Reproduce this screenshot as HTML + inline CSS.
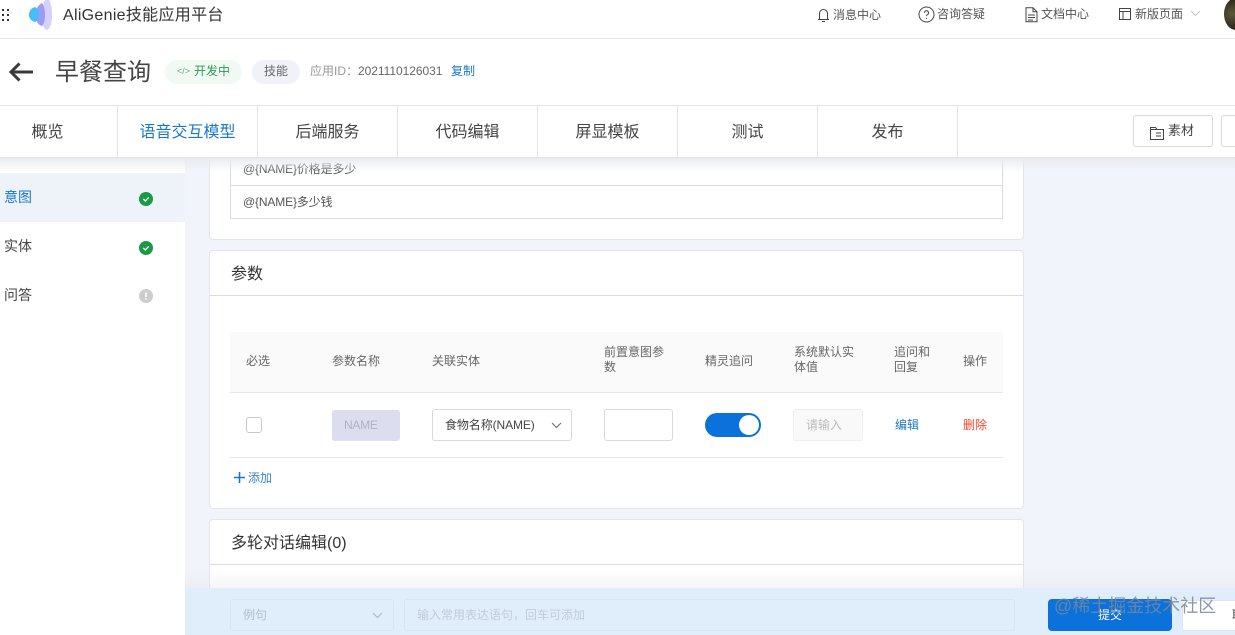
<!DOCTYPE html>
<html lang="zh-CN"><head><meta charset="utf-8"><title>AliGenie</title>
<style>
*{box-sizing:border-box;margin:0;padding:0}
html,body{width:1235px;height:635px;overflow:hidden;background:#f1f4fb}
body{position:relative;font-family:"Liberation Sans","Noto Sans CJK SC",sans-serif;color:#333}
.a{position:absolute;white-space:nowrap}
.abs{position:absolute}
.t12{font-size:12px;line-height:18px;color:#555}
.tab{position:absolute;top:106px;height:51px;line-height:54px;text-align:center;font-size:16px;color:#444;border-right:1px solid #e4e4e4;background:#fff}
.card{position:absolute;left:209px;width:815px;background:#fff;border:1px solid #e3e5ea;border-radius:4px}
.hl{position:absolute;height:1px;background:#e2e2e2}
</style></head><body>

<!-- top bar -->
<div class="abs" style="left:0;top:0;width:1235px;height:39px;background:#fff;border-bottom:1px solid #e8e8e8"></div>
<svg class="abs" style="left:0;top:0" width="60" height="32" viewBox="0 0 60 32">
<g fill="#333"><rect x="2" y="9" width="2" height="2"/><rect x="7" y="9" width="2" height="2"/><rect x="2" y="14" width="2" height="2"/><rect x="7" y="14" width="2" height="2"/><rect x="2" y="19" width="2" height="2"/><rect x="7" y="19" width="2" height="2"/></g>
<path d="M47 -2C51 0 52 8 52 15C52 22 51 28 47 30C44 29 42 26 42 15C42 6 44 0 47 -2Z" fill="#d6d0fa"/>
<path d="M42 3C44 6 45 10 45 15C45 20 44 24 42 26C38 25 35 20 35 15C35 10 38 5 42 3Z" fill="#9c9cf5"/>
<path d="M35 7C37 8 39 11 39 15C39 19 37 21 35 22C31 21 29 18 29 15C29 11 31 8 35 7Z" fill="#45bdf8"/>
</svg>
<div class="a" style="left:63px;top:6px;font-size:16px;line-height:20px;color:#333;letter-spacing:.3px">AliGenie技能应用平台</div>

<svg class="abs" style="left:816px;top:7px" width="15" height="16" viewBox="0 0 15 16" fill="none" stroke="#444"><path d="M2 12.500h11M3.500 12.500V6.500a4 4 0 0 1 8 0v6M6 14.500h3"/></svg>
<div class="a t12" style="left:833px;top:6px;color:#555">消息中心</div>
<svg class="abs" style="left:918px;top:6px" width="17" height="17" viewBox="0 0 17 17" fill="none" stroke="#444"><circle cx="8.500" cy="8.500" r="7.500"/><path d="M6.500 6.800a2 2 0 1 1 3 1.700c-.7.400-1 .8-1 1.600M8.500 12v1"/></svg>
<div class="a t12" style="left:937px;top:5px;color:#555">咨询答疑</div>
<svg class="abs" style="left:1025px;top:7px" width="13" height="16" viewBox="0 0 13 16" fill="none" stroke="#444"><path d="M1 .8h7l4 4v10H1zM8 .8v4h4M3 8h7M3 10.500h7M3 13h5"/></svg>
<div class="a t12" style="left:1041px;top:5px;color:#555">文档中心</div>
<svg class="abs" style="left:1119px;top:8px" width="12" height="12" viewBox="0 0 12 12" fill="none" stroke="#444"><path d="M.5.500h11v11H.5zM.5 3.500h11M4 3.500v8"/></svg>
<div class="a t12" style="left:1135px;top:5px;color:#555">新版页面</div>
<svg class="abs" style="left:1190px;top:10px" width="11" height="7" viewBox="0 0 11 7" fill="none" stroke="#c9c9c9"><path d="M1 1l4.500 4.500L10 1"/></svg>
<div class="abs" style="left:1224px;top:-2px;width:24px;height:32px;border-radius:50%;background:radial-gradient(circle at 35% 50%,#5d5a3a,#2a2418 70%)"></div>

<!-- sub header -->
<div class="abs" style="left:0;top:39px;width:1235px;height:67px;background:#fff;border-bottom:1px solid #e4e4e4"></div>
<svg class="abs" style="left:9px;top:61px" width="25" height="22" viewBox="0 0 25 22" fill="none" stroke="#3a3a3a" stroke-width="3"><path d="M24 11H2M10.500 2.500L2 11l8.500 8.500"/></svg>
<div class="a" style="left:55px;top:58px;font-size:24px;line-height:30px;color:#444">早餐查询</div>
<div class="abs" style="left:165px;top:60px;width:77px;height:24px;border-radius:12px;background:#f0faf3"></div>
<div class="a" style="left:177px;top:64px;font-size:9px;line-height:14px;color:#6ea785">&lt;/&gt;</div>
<div class="a" style="left:194px;top:63px;font-size:12px;line-height:17px;color:#2b9a5a">开发中</div>
<div class="abs" style="left:252px;top:60px;width:48px;height:24px;border-radius:12px;background:#f0f2f8"></div>
<div class="a" style="left:264px;top:63px;font-size:12px;line-height:17px;color:#666">技能</div>
<div class="a" style="left:310px;top:63px;font-size:12px;line-height:17px;color:#999">应用ID：<span style="color:#666;letter-spacing:-.05px">2021110126031</span></div>
<div class="a" style="left:451px;top:63px;font-size:12px;line-height:17px;color:#1a78c8">复制</div>

<!-- sidebar -->
<div class="abs" style="left:0;top:158px;width:185px;height:477px;background:#fff"></div>
<div class="abs" style="left:0;top:173px;width:185px;height:49px;background:#eef2f9"></div>
<div class="a" style="left:4px;top:187px;font-size:14px;line-height:20px;color:#1a78c8">意图</div>
<div class="a" style="left:4px;top:236px;font-size:14px;line-height:20px;color:#444">实体</div>
<div class="a" style="left:4px;top:285px;font-size:14px;line-height:20px;color:#444">问答</div>
<svg class="abs" style="left:139px;top:192px" width="14" height="14" viewBox="0 0 14 14"><circle cx="7" cy="7" r="7" fill="#1a9a47"/><path d="M4.300 7l2 2 3.400-3.600" fill="none" stroke="#fff" stroke-width="1.300"/></svg>
<svg class="abs" style="left:139px;top:241px" width="14" height="14" viewBox="0 0 14 14"><circle cx="7" cy="7" r="7" fill="#1a9a47"/><path d="M4.300 7l2 2 3.400-3.600" fill="none" stroke="#fff" stroke-width="1.300"/></svg>
<svg class="abs" style="left:139px;top:289px" width="14" height="14" viewBox="0 0 14 14"><circle cx="7" cy="7" r="7" fill="#cdcdcd"/><path d="M7 3.500v4.500M7 9.300v1.400" fill="none" stroke="#fff" stroke-width="1.600"/></svg>

<!-- card 1 -->
<div class="card" style="top:140px;height:100px"></div>
<div class="abs" style="left:230px;top:150px;width:773px;height:69px;border:1px solid #dcdcdc;border-top:0"></div>
<div class="hl" style="left:230px;top:185px;width:773px;background:#dcdcdc"></div>
<div class="a" style="left:243px;top:160px;font-size:12px;line-height:18px;color:#555;letter-spacing:-.15px">@{NAME}价格是多少</div>
<div class="a" style="left:243px;top:193px;font-size:12px;line-height:18px;color:#555;letter-spacing:-.15px">@{NAME}多少钱</div>

<!-- card 2 -->
<div class="card" style="top:250px;height:259px"></div>
<div class="hl" style="left:210px;top:295px;width:813px;background:#dcdcdc"></div>
<div class="a" style="left:231px;top:264px;font-size:16px;line-height:22px;color:#333">参数</div>
<div class="abs" style="left:230px;top:332px;width:773px;height:60px;background:#fafafa"></div>
<div class="hl" style="left:230px;top:392px;width:773px;background:#e8e8e8"></div>
<div class="hl" style="left:230px;top:457px;width:773px;background:#e8e8e8"></div>
<div class="a" style="left:246px;top:352px;font-size:12px;line-height:18px;color:#666">必选</div>
<div class="a" style="left:332px;top:352px;font-size:12px;line-height:18px;color:#666">参数名称</div>
<div class="a" style="left:432px;top:352px;font-size:12px;line-height:18px;color:#666">关联实体</div>
<div class="a" style="left:604px;top:345px;font-size:12px;line-height:15px;color:#666">前置意图参<br>数</div>
<div class="a" style="left:705px;top:352px;font-size:12px;line-height:18px;color:#666">精灵追问</div>
<div class="a" style="left:794px;top:345px;font-size:12px;line-height:15px;color:#666">系统默认实<br>体值</div>
<div class="a" style="left:894px;top:345px;font-size:12px;line-height:15px;color:#666">追问和<br>回复</div>
<div class="a" style="left:963px;top:352px;font-size:12px;line-height:18px;color:#666">操作</div>

<div class="abs" style="left:246px;top:417px;width:16px;height:16px;border:1px solid #c8c8c8;border-radius:3px;background:#fff"></div>
<div class="abs" style="left:332px;top:410px;width:68px;height:31px;background:#dcdef0;border-radius:3px"></div>
<div class="a" style="left:344px;top:416px;font-size:12px;line-height:18px;color:#b0b2c2;letter-spacing:-.25px">NAME</div>
<div class="abs" style="left:432px;top:409px;width:140px;height:32px;border:1px solid #d9d9d9;border-radius:3px;background:#fff"></div>
<div class="a" style="left:445px;top:416px;font-size:12px;line-height:18px;color:#444;letter-spacing:-.1px">食物名称(NAME)</div>
<svg class="abs" style="left:551px;top:422px" width="11" height="7" viewBox="0 0 11 7" fill="none" stroke="#666"><path d="M1 1l4.500 4.500L10 1"/></svg>
<div class="abs" style="left:604px;top:409px;width:69px;height:32px;border:1px solid #d9d9d9;border-radius:3px;background:#fff"></div>
<div class="abs" style="left:705px;top:413px;width:56px;height:24px;background:#0a72da;border-radius:12px"></div>
<div class="abs" style="left:739px;top:415px;width:20px;height:20px;background:#fff;border-radius:50%"></div>
<div class="abs" style="left:793px;top:409px;width:70px;height:32px;background:#f9f9f9;border:1px solid #eee;border-radius:3px"></div>
<div class="a" style="left:806px;top:416px;font-size:12px;line-height:18px;color:#bbb">请输入</div>
<div class="a" style="left:895px;top:416px;font-size:12px;line-height:18px;color:#1a78c8">编辑</div>
<div class="a" style="left:963px;top:416px;font-size:12px;line-height:18px;color:#f0492e">删除</div>
<svg class="abs" style="left:234px;top:472px" width="11" height="11" viewBox="0 0 11 11" fill="none" stroke="#1a78c8" stroke-width="1.600"><path d="M5.500 0v11M0 5.500h11"/></svg>
<div class="a" style="left:248px;top:469px;font-size:12px;line-height:18px;color:#3a85cc">添加</div>

<!-- card 3 -->
<div class="card" style="top:519px;height:140px"></div>
<div class="hl" style="left:210px;top:564px;width:813px;background:#dcdcdc"></div>
<div class="a" style="left:231px;top:533px;font-size:16px;line-height:22px;color:#333">多轮对话编辑(0)</div>

<!-- tabs -->
<div class="abs" style="left:0;top:158px;width:1235px;height:14px;background:linear-gradient(#e9ebef,rgba(240,243,248,0))"></div>
<div class="abs" style="left:0;top:106px;width:1235px;height:52px;background:#fff;border-bottom:1px solid #e4e4e4"></div>
<div class="tab" style="left:0;width:118px;padding-right:22px">概览</div>
<div class="tab" style="left:118px;width:140px;color:#1a78c8">语音交互模型</div>
<div class="tab" style="left:258px;width:140px">后端服务</div>
<div class="tab" style="left:398px;width:140px">代码编辑</div>
<div class="tab" style="left:538px;width:140px">屏显模板</div>
<div class="tab" style="left:678px;width:140px">测试</div>
<div class="tab" style="left:818px;width:140px">发布</div>
<div class="abs" style="left:1133px;top:115px;width:80px;height:32px;border:1px solid #d9d9d9;border-radius:3px;background:#fff"></div>
<svg class="abs" style="left:1150px;top:126px" width="14" height="14" viewBox="0 0 14 14" fill="none" stroke="#444"><path d="M.5 13.500V1.500h5l1.500 2h6.500v10zM.5 3.500h6.500M6 7h5M6 10h5"/></svg>
<div class="a" style="left:1168px;top:122px;font-size:13px;line-height:18px;color:#444">素材</div>
<div class="abs" style="left:1221px;top:115px;width:30px;height:32px;border:1px solid #d9d9d9;border-radius:3px;background:#fff"></div>

<!-- bottom bar -->
<div class="abs" style="left:185px;top:570px;width:1050px;height:18px;background:linear-gradient(rgba(225,225,225,0),rgba(225,225,225,.35))"></div>
<div class="abs" style="left:185px;top:588px;width:1050px;height:47px;background:#e0edfb"></div>
<div class="abs" style="left:230px;top:599px;width:164px;height:32px;border:1px solid #d8e5f4;border-radius:3px"></div>
<div class="a" style="left:243px;top:606px;font-size:12px;line-height:18px;color:#b3bfcc">例句</div>
<svg class="abs" style="left:372px;top:612px" width="11" height="7" viewBox="0 0 11 7" fill="none" stroke="#aab5c2"><path d="M1 1l4.500 4.500L10 1"/></svg>
<div class="abs" style="left:404px;top:599px;width:611px;height:32px;border:1px solid #d8e5f4;border-radius:3px"></div>
<div class="a" style="left:417px;top:606px;font-size:12px;line-height:18px;color:#c0ccd9">输入常用表达语句，回车可添加</div>
<div class="abs" style="left:1048px;top:599px;width:124px;height:32px;background:#0a72da;border-radius:4px"></div>
<div class="a" style="left:1098px;top:606px;font-size:12px;line-height:18px;color:#fff">提交</div>
<div class="abs" style="left:1182px;top:600px;width:70px;height:31px;background:#fff;border-radius:3px;border:1px solid #dde5ee"></div>
<div class="a" style="left:1232px;top:606px;font-size:12px;line-height:18px;color:#444">取</div>
<div class="a" style="left:1054px;top:595px;font-size:18px;line-height:22px;color:rgba(120,135,155,.85)">@稀土掘金技术社区</div>
</body></html>
